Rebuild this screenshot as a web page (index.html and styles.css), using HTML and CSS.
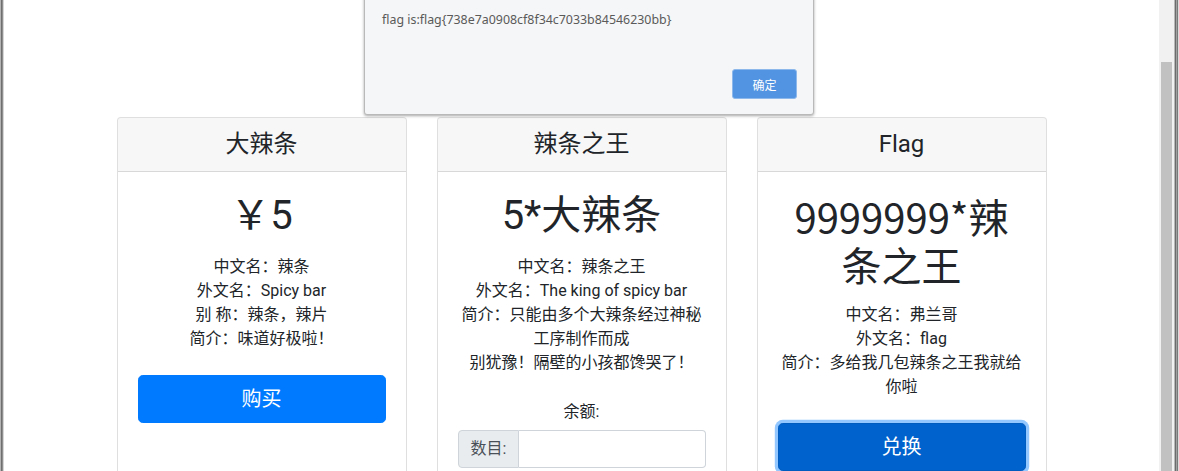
FILE: index.html
```html
<!DOCTYPE html>
<html lang="zh">
<head>
<meta charset="utf-8">
<title>辣条</title>
<link rel="stylesheet" href="styles.css">
</head>
<body>
<div class="frame">
  <div class="edge-left"></div>
  <div class="viewport">
    <div class="container">
      <div class="card-deck">
        <div class="card">
          <div class="card-header"><h4>大辣条</h4></div>
          <div class="card-body">
            <h1 class="price">￥5</h1>
            <ul class="info">
              <li>中文名：辣条</li>
              <li>外文名：Spicy bar</li>
              <li>别 称：辣条，辣片</li>
              <li>简介：味道好极啦！</li>
            </ul>
            <button class="btn">购买</button>
          </div>
        </div>
        <div class="card">
          <div class="card-header"><h4>辣条之王</h4></div>
          <div class="card-body">
            <h1 class="price">5*大辣条</h1>
            <ul class="info">
              <li>中文名：辣条之王</li>
              <li>外文名：The king of spicy bar</li>
              <li>简介：只能由多个大辣条经过神秘工序制作而成</li>
              <li>别犹豫！隔壁的小孩都馋哭了！</li>
            </ul>
            <div class="balance">余额:</div>
            <div class="input-group">
              <span class="input-prepend">数目:</span>
              <input class="form-control" type="text">
            </div>
          </div>
        </div>
        <div class="card">
          <div class="card-header"><h4>Flag</h4></div>
          <div class="card-body">
            <h1 class="price cjk">9999999*辣条之王</h1>
            <ul class="info">
              <li>中文名：弗兰哥</li>
              <li>外文名：flag</li>
              <li>简介：多给我几包辣条之王我就给你啦</li>
            </ul>
            <button class="btn btn-active">兑换</button>
          </div>
        </div>
      </div>
    </div>
    <div class="dialog">
      <div class="dialog-text">flag is:flag{738e7a0908cf8f34c7033b84546230bb}</div>
      <div class="dialog-actions"><button class="dialog-btn">确定</button></div>
    </div>
  </div>
  <div class="scrollbar"><div class="thumb"></div></div>
  <div class="edge-right"></div>
</div>
</body>
</html>
```
FILE: styles.css
```css
* { box-sizing: border-box; }
html, body { margin: 0; padding: 0; }
body {
  width: 1179px;
  height: 471px;
  overflow: hidden;
  background: #fff;
  font-family: Roboto, "Noto Sans CJK SC", sans-serif;
  font-size: 16px;
  line-height: 1.5;
  color: #212529;
}
.frame { display: flex; height: 471px; }
.edge-left {
  width: 4px;
  flex: none;
  background: linear-gradient(to right, #b4b4b4 0 1px, #6f6f6f 1px 2px, #8e8e8e 2px 3px, #d6d6d6 3px 4px);
}
.edge-right {
  width: 5px;
  flex: none;
  background: linear-gradient(to right, #b8b8b8 0 1px, #6c6c6c 1px 2px, #a0a0a0 2px 3px, #7a7a7a 3px 4px, #dcdcdc 4px 5px);
}
.scrollbar {
  width: 15px;
  flex: none;
  background: #f1f1f1;
  padding: 62px 2px 0 2px;
}
.thumb { height: 100%; background: #c1c1c1; }
.viewport {
  flex: 1;
  position: relative;
  overflow: hidden;
  background: #fff;
}
.container {
  max-width: 960px;
  margin: 0 auto;
  padding: 117px 15px 0;
}
.card-deck { display: flex; gap: 30px; }
.card {
  flex: 1 1 0;
  min-width: 0;
  background: #fff;
  border: 1px solid rgba(0,0,0,.125);
  border-radius: .25rem;
  text-align: center;
  height: 420px;
}
.card-header {
  background: rgba(0,0,0,.03);
  border-bottom: 1px solid rgba(0,0,0,.125);
  padding: .75rem 1.25rem;
  border-radius: calc(.25rem - 1px) calc(.25rem - 1px) 0 0;
}
.card-header h4 {
  margin: 0;
  font-size: 1.5rem;
  font-weight: 400;
  line-height: 1.2;
}
.card-body { padding: 1.25rem; }
.price {
  margin: 0 0 15px;
  font-size: 2.5rem;
  font-weight: 400;
  line-height: 1.2;
}
.cjk { font-family: "Noto Sans CJK SC", sans-serif; }
.info { list-style: none; margin: 0 0 24px; padding: 0; }
.btn {
  display: block;
  width: 100%;
  font-family: inherit;
  font-size: 1.25rem;
  line-height: 1.5;
  padding: .5rem 1rem;
  border-radius: .3rem;
  border: 1px solid #007bff;
  background: #007bff;
  color: #fff;
}
.btn-active {
  background: #0062cc;
  border-color: #005cbf;
  box-shadow: 0 0 0 .2rem rgba(38,143,255,.5);
}
.balance { margin: 25px 0 6px; }
.input-group { display: flex; height: 38px; }
.input-prepend {
  flex: none;
  padding: .375rem .75rem;
  background: #e9ecef;
  border: 1px solid #ced4da;
  border-radius: .25rem 0 0 .25rem;
  color: #495057;
  line-height: 1.5;
}
.form-control {
  flex: 1;
  min-width: 0;
  border: 1px solid #ced4da;
  border-left: 0;
  border-radius: 0 .25rem .25rem 0;
  font: inherit;
  padding: .375rem .75rem;
}
.dialog {
  position: absolute;
  left: 360px;
  top: -10px;
  width: 450px;
  height: 125px;
  background: #f5f6f7;
  border: 1px solid #b9b9b9;
  border-radius: 0 0 3px 3px;
  box-shadow: 0 1px 3px rgba(0,0,0,.35);
  padding: 20px 16px 15px 17px;
  display: flex;
  flex-direction: column;
  justify-content: space-between;
}
.dialog-text {
  font-family: "Noto Sans", sans-serif;
  font-size: 12.4px;
  color: #5a5a5a;
  line-height: 18px;
}
.dialog-actions { display: flex; justify-content: flex-end; }
.dialog-btn {
  width: 65px;
  height: 30px;
  background: #5294e2;
  border: 1px solid #8db8ec;
  border-radius: 3px;
  color: #fff;
  font-family: "Noto Sans CJK SC", sans-serif;
  font-size: 12px;
  padding: 0;
}
```
